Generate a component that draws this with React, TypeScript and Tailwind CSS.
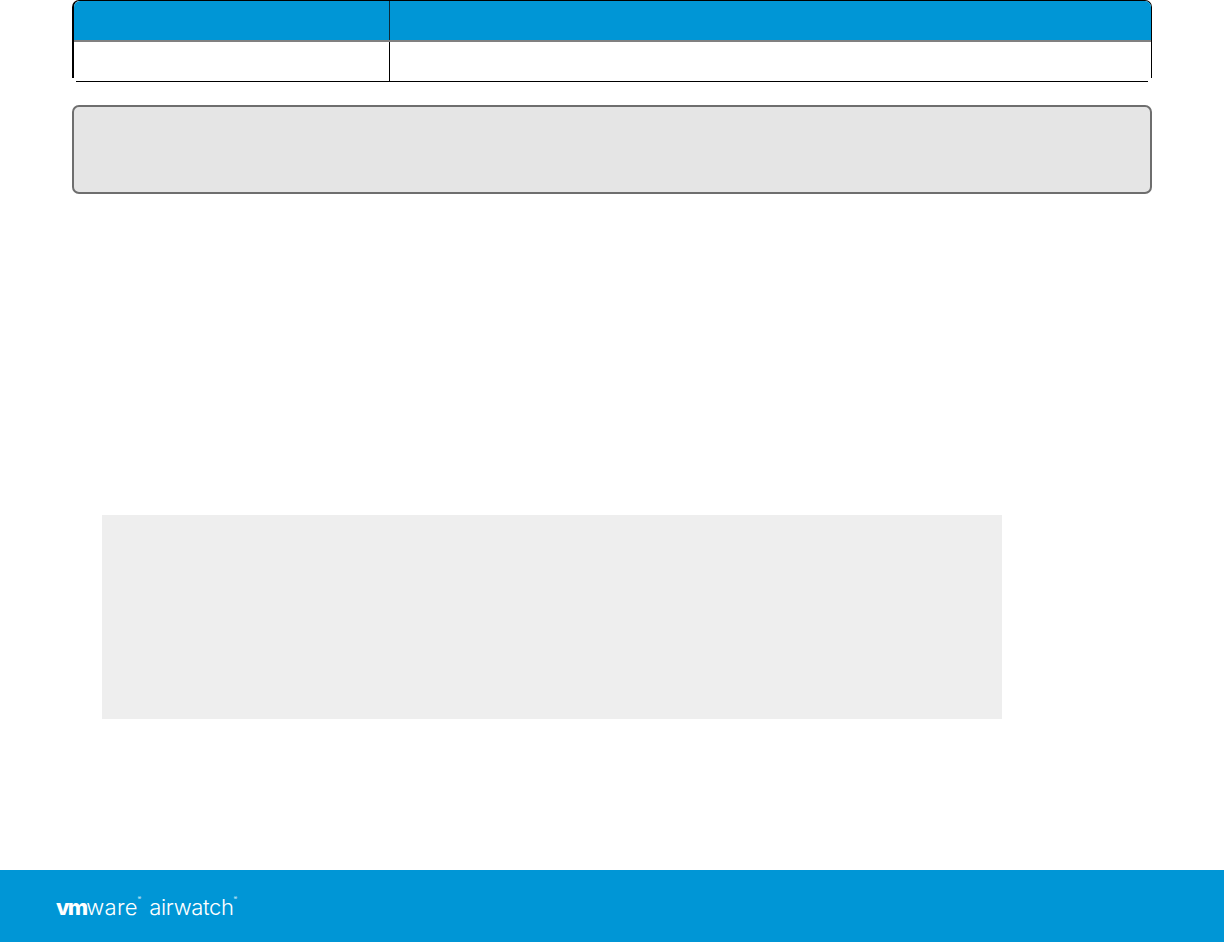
export default function App() {
  return (
    <div className="flex h-[942px] flex-col bg-white font-['Inter',sans-serif]">
      <div className="mx-[72px] flex h-[78px] shrink-0 flex-col rounded-t-[7px] border-y-0 border-t border-r border-l-2 border-t-black border-r-black border-l-black">
        <div className="flex h-[41px] shrink-0 rounded-t-[6px] border-b-2 border-b-[#808080] bg-[#0096d6]">
          <div className="w-[316px] border-r border-r-[#0a2a3a]" />
          <div className="flex-1" />
        </div>
        <div className="flex h-[39px] shrink-0">
          <div className="w-[316px] border-r border-r-black" />
          <div className="flex-1" />
        </div>
      </div>
      <div className="mx-[76px] mt-[3px] h-px shrink-0 bg-black" />
      <div className="mx-[72px] mt-[23px] h-[89px] rounded-[7px] border-2 border-[#6e6e6e] bg-[#e5e5e5]" />
      <div className="ml-[102px] mt-[321px] h-[204px] w-[900px] bg-[#eeeeee]" />
      <footer className="mt-auto flex h-[72px] items-center bg-[#0096d6] pl-[56px] text-white">
        <div className="flex items-baseline pt-[2px] leading-none">
          <span className="text-[22px] font-extrabold tracking-[-1.8px]">vm</span>
          <span className="text-[22px] font-light tracking-[0.3px]">ware</span>
          <span className="self-start text-[5px]">®</span>
          <span className="ml-[8px] text-[22px] font-light tracking-[-0.3px]">airwatch</span>
          <span className="self-start text-[5px]">®</span>
        </div>
      </footer>
    </div>
  );
}
